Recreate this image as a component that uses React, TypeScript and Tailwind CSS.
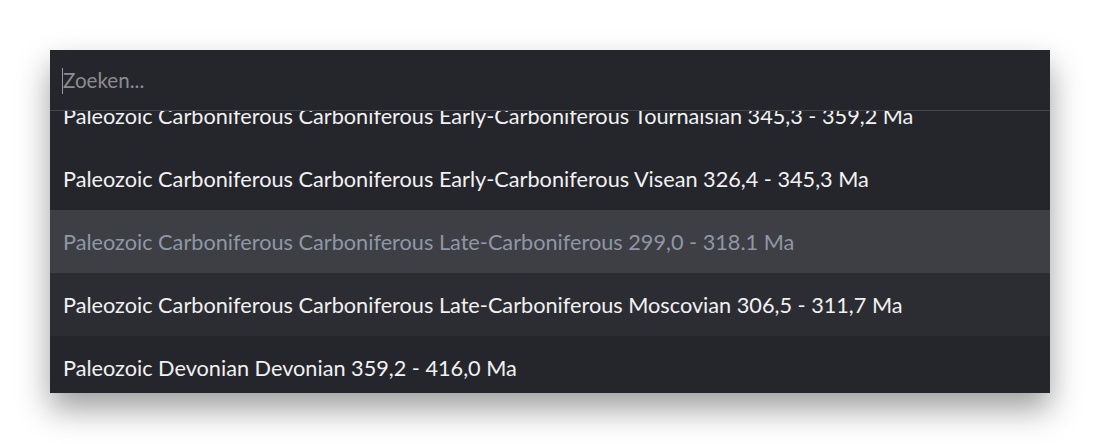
import React from "react";

const rows = [
  { t: "Paleozoic Carboniferous Carboniferous Early-Carboniferous Tournaisian 345,3 - 359,2 Ma", bg: "bg-[#25262b]", c: "text-[#f1f1f3]" },
  { t: "Paleozoic Carboniferous Carboniferous Early-Carboniferous Visean 326,4 - 345,3 Ma", bg: "bg-[#25262b]", c: "text-[#f1f1f3]" },
  { t: "Paleozoic Carboniferous Carboniferous Late-Carboniferous 299,0 - 318.1 Ma", bg: "bg-[#3e3f45]", c: "text-[#8d97a5]" },
  { t: "Paleozoic Carboniferous Carboniferous Late-Carboniferous Moscovian 306,5 - 311,7 Ma", bg: "bg-[#2c2d32]", c: "text-[#f1f1f3]" },
  { t: "Paleozoic Devonian Devonian 359,2 - 416,0 Ma", bg: "bg-[#25262b]", c: "text-[#f1f1f3]" },
];

export default function App() {
  return (
    <div className="w-[1100px] h-[444px] bg-white pt-[50px] pl-[50px]" style={{ fontFamily: "Lato, 'Noto Sans', sans-serif" }}>
      <div className="w-[1000px] h-[343px] bg-[#25262b] flex flex-col overflow-hidden shadow-[0_16px_30px_rgba(0,0,0,0.38)]">
        <div className="h-[61px] shrink-0 flex items-center pl-[13px] relative border-b border-[#45464b]">
          <span className="absolute left-[12px] top-[18px] w-px h-[26px] bg-[#9a9a9a]" />
          <span className="text-[20.6px] text-[#8c8c90]">Zoeken...</span>
        </div>
        <div className="flex-1 overflow-hidden">
          <div className="-mt-[27px]">
            {rows.map((r, i) => (
              <div key={i} className={`h-[63px] flex items-center pl-[13px] pt-[2px] ${r.bg}`}>
                <span className={`text-[21.7px] ${r.c} whitespace-nowrap`}>{r.t}</span>
              </div>
            ))}
          </div>
        </div>
      </div>
    </div>
  );
}
